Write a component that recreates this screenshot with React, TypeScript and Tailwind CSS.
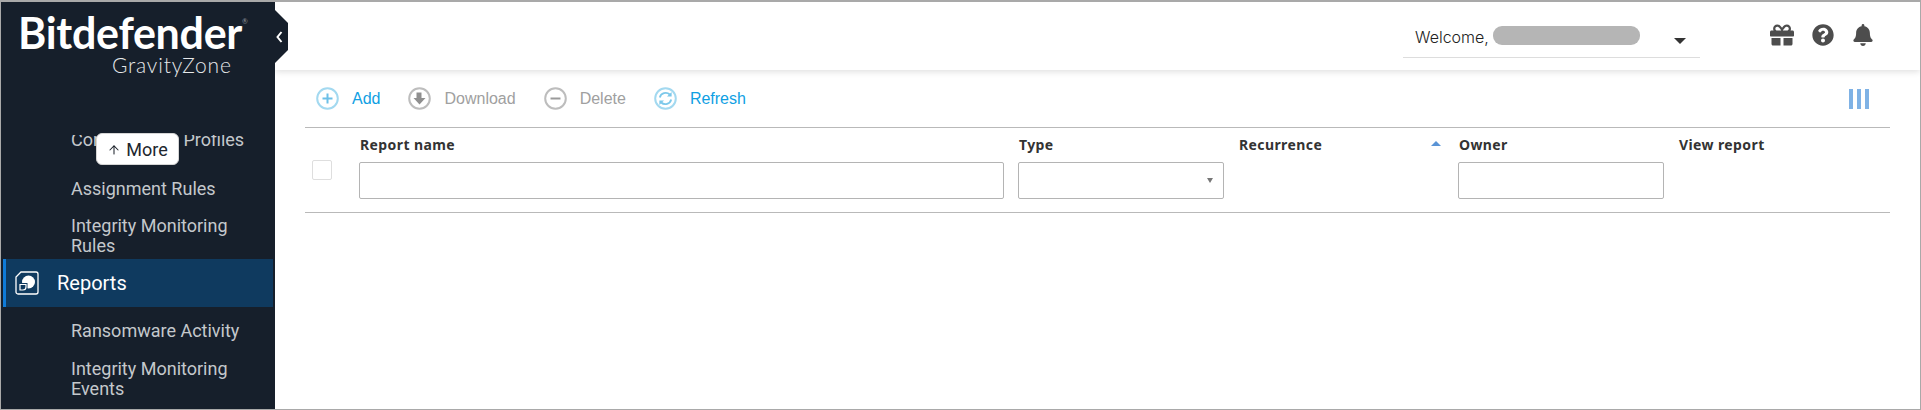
import { ArrowUp } from "lucide-react";
import { FaBell, FaGift, FaQuestionCircle } from "react-icons/fa";

const roboto = "font-['Roboto',sans-serif]";
const arial = "font-['Liberation_Sans',Arial,sans-serif]";

function SubItem({ children, className }: { children: React.ReactNode; className: string }) {
  return (
    <div className={`pl-[70px] pr-4 text-[18px] leading-[20px] text-[#c4c8cc] ${className}`}>
      {children}
    </div>
  );
}

function ReportsIcon() {
  return (
    <svg width="24" height="24" viewBox="0 0 24 24" className="shrink-0">
      <path d="M6 1h15a2 2 0 0 1 2 2v18a2 2 0 0 1-2 2H3a2 2 0 0 1-2-2V6z" fill="none" stroke="#fff" strokeWidth="1.3" />
      <circle cx="13.5" cy="11" r="6.5" fill="#fff" />
      <rect x="4" y="12" width="8.5" height="8.5" fill="#0f3a5f" />
      <path d="M5 13.5h6v2.5a3 3 0 0 1-3 3H5z" fill="none" stroke="#fff" strokeWidth="1.2" />
    </svg>
  );
}

function Sidebar() {
  return (
    <aside className={`relative flex w-[274px] shrink-0 flex-col bg-[#161f2b] ${roboto}`}>
      <div className="h-[133px] shrink-0 pl-[17px] pt-[9px] text-white">
        <div className="relative font-['Lato',sans-serif] text-[43px] font-bold leading-[44px] tracking-[-0.3px]">
          Bitdefender
          <span className="absolute left-[224px] top-[6px] text-[7px] font-normal leading-[8px] text-[#8b929a]">®</span>
        </div>
        <div className="pl-[94px] font-['Lato',sans-serif] text-[21px] font-light leading-[20px] tracking-[0.8px] text-[#e6e8ea]">
          GravityZone
        </div>
      </div>

      <nav className="flex-1 overflow-hidden">
        <SubItem className="-mt-[5px]">Configuration Profiles</SubItem>
        <SubItem className="mt-[29px]">Assignment Rules</SubItem>
        <SubItem className="mt-[17px]">
          Integrity Monitoring
          <br />
          Rules
        </SubItem>
        <div className="ml-[2px] mr-[2px] mt-[3px] flex h-[48px] items-center border-l-[3px] border-[#0f7bd8] bg-[#0f3a5f] pl-[9px] text-[20px] text-white">
          <ReportsIcon />
          <span className="ml-[18px]">Reports</span>
        </div>
        <SubItem className="mt-[14px]">Ransomware Activity</SubItem>
        <SubItem className="mt-[18px]">
          Integrity Monitoring
          <br />
          Events
        </SubItem>
      </nav>

      <div className="absolute left-[95px] top-[131px] flex h-[32px] w-[83px] items-center justify-center gap-[5px] rounded-[6px] border border-[#d5d5d5] bg-white pt-[1px] text-[18px] text-[#20262e]">
        <ArrowUp size={14} strokeWidth={1.8} />
        More
      </div>

      <svg width="14" height="54" viewBox="0 0 14 54" className="absolute left-[274px] top-[8px]">
        <path d="M0 0l13 13v27L0 53z" fill="#161f2b" />
        <path d="M6.5 22L2.5 27l4 5" fill="none" stroke="#fff" strokeWidth="2" />
      </svg>
    </aside>
  );
}

function Header() {
  return (
    <header className="flex h-[68px] shrink-0 items-start justify-end bg-white pr-[46px] shadow-[0_2px_6px_rgba(0,0,0,0.12)]">
      <div className="mr-[70px] mt-[21px] flex h-[35px] w-[297px] items-start border-b border-[#dddddd] pl-[12px] pt-[3px] font-['Inter',sans-serif] text-[16px] font-light leading-[22px] text-[#222]">
        Welcome,
        <span className="ml-[4px] h-[19px] w-[147px] rounded-[9px] bg-[#b5b5b5]" />
        <span className="ml-[34px] mt-[12px] h-0 w-0 border-x-[6px] border-t-[6px] border-x-transparent border-t-[#333]" />
      </div>
      <div className="mt-[21px] flex items-center gap-[18px] text-[#4d4d4d]">
        <FaGift size={24} />
        <FaQuestionCircle size={22} />
        <FaBell size={22} />
      </div>
    </header>
  );
}

function ToolButton({ icon, label, active }: { icon: React.ReactNode; label: string; active: boolean }) {
  return (
    <div className={`flex items-center gap-[13px] ${active ? "text-[#0fa0e3]" : "text-[#a0a0a0]"}`}>
      {icon}
      <span className="text-[16px] leading-[20px]">{label}</span>
    </div>
  );
}

const circleBlue = <circle cx="11.5" cy="11.5" r="10.3" fill="none" stroke="#a3d9f0" strokeWidth="2" />;
const circleGray = <circle cx="11.5" cy="11.5" r="10.3" fill="none" stroke="#bdbdbd" strokeWidth="2" />;

function Toolbar() {
  return (
    <div className={`flex h-[57px] items-center pl-[11px] pr-[11px] ${arial}`}>
      <ToolButton
        active
        label="Add"
        icon={
          <svg width="23" height="23" viewBox="0 0 23 23">
            {circleBlue}
            <path d="M11.5 6.5v10M6.5 11.5h10" stroke="#6cc0e8" strokeWidth="2" />
          </svg>
        }
      />
      <div className="w-[28px]" />
      <ToolButton
        active={false}
        label="Download"
        icon={
          <svg width="23" height="23" viewBox="0 0 23 23">
            {circleGray}
            <path d="M8.5 5.5h5v5.5h4l-6 6.5-6-6.5h3z" fill="#8f8f8f" />
          </svg>
        }
      />
      <div className="w-[28px]" />
      <ToolButton
        active={false}
        label="Delete"
        icon={
          <svg width="23" height="23" viewBox="0 0 23 23">
            {circleGray}
            <path d="M6.5 11.5h10" stroke="#9a9a9a" strokeWidth="2" />
          </svg>
        }
      />
      <div className="w-[28px]" />
      <ToolButton
        active
        label="Refresh"
        icon={
          <svg width="23" height="23" viewBox="0 0 23 23">
            {circleBlue}
            <path d="M5.8 10.5a6 6 0 0 1 10-3" fill="none" stroke="#7cc8ea" strokeWidth="1.8" />
            <path d="M17.6 5v4.6H13z" fill="#7cc8ea" />
            <path d="M17.2 12.5a6 6 0 0 1-10 3" fill="none" stroke="#7cc8ea" strokeWidth="1.8" />
            <path d="M5.4 18v-4.6H10z" fill="#7cc8ea" />
          </svg>
        }
      />
      <div className="ml-auto mr-[10px] flex gap-[4px]">
        <span className="h-[20px] w-[4px] bg-[#7fb2e5]" />
        <span className="h-[20px] w-[4px] bg-[#7fb2e5]" />
        <span className="h-[20px] w-[4px] bg-[#7fb2e5]" />
      </div>
    </div>
  );
}

const headCell = "pl-[1px] text-[14px] font-bold leading-[18px] tracking-[0.4px] text-[#333] font-['Noto_Sans',sans-serif]";
const field = "mt-[8px] h-[37px] rounded-[2px] border border-[#b4b4b4] bg-white";

function ReportsTable() {
  return (
    <div className="grid h-[86px] grid-cols-[54px_659px_220px_220px_220px_1fr] border-y border-[#b9b9b9]">
      <div className="pl-[7px] pt-[32px]">
        <div className="h-[20px] w-[20px] rounded-[2px] border border-[#dedede] bg-white" />
      </div>
      <div className="pt-[8px]">
        <div className={headCell}>Report name</div>
        <div className={`${field} w-[645px]`} />
      </div>
      <div className="pt-[8px]">
        <div className={headCell}>Type</div>
        <div className={`${field} flex w-[206px] items-center justify-end pr-[10px]`}>
          <span className="h-0 w-0 border-x-[3px] border-t-[5px] border-x-transparent border-t-[#777]" />
        </div>
      </div>
      <div className="flex items-start pt-[8px]">
        <div className={headCell}>Recurrence</div>
        <span className="ml-[109px] mt-[5px] h-0 w-0 border-x-[5px] border-b-[5px] border-x-transparent border-b-[#5a94d6]" />
      </div>
      <div className="pt-[8px]">
        <div className={headCell}>Owner</div>
        <div className={`${field} w-[206px]`} />
      </div>
      <div className="pt-[8px]">
        <div className={headCell}>View report</div>
      </div>
    </div>
  );
}

export default function App() {
  return (
    <div className="flex h-[410px] w-[1921px] overflow-hidden border border-t-2 border-[#a9a9a9] bg-white">
      <Sidebar />
      <main className="flex min-w-0 flex-1 flex-col">
        <Header />
        <div className="pl-[30px] pr-[30px]">
          <Toolbar />
          <ReportsTable />
        </div>
      </main>
    </div>
  );
}
